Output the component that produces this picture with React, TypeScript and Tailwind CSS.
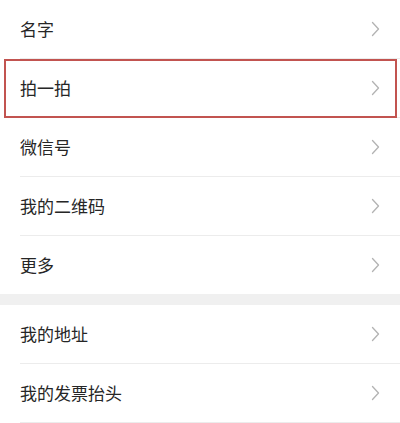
import React from 'react';

const Chevron: React.FC = () => (
  <svg className="w-[9px] h-[16px] text-[#b3b3b3]" viewBox="0 0 9 16" fill="none" stroke="currentColor">
    <path d="M1.5 1.5l6 6.5-6 6.5" strokeWidth={1.3} strokeLinecap="round" strokeLinejoin="round" />
  </svg>
);

const Row: React.FC<{ label: string; last?: boolean; highlight?: boolean }> = ({ label, last, highlight }) => (
  <div className="relative pl-5">
    <div
      className={`flex items-center justify-between h-[58px] pr-[20px] ${last ? '' : 'h-[59px] border-b border-[#ececec]'}`}
    >
      <span className="text-[17px] text-[#262626]">{label}</span>
      <Chevron />
    </div>
    {highlight && (
      <div className="absolute top-0 bottom-0 left-[4px] right-[3px] border-2 border-[#c25450]"></div>
    )}
  </div>
);

export default function App() {
  const groupA = ['名字', '拍一拍', '微信号', '我的二维码', '更多'];
  const groupB = ['我的地址', '我的发票抬头'];

  return (
    <div
      className="w-[400px] h-[423px] bg-white overflow-hidden"
      style={{ fontFamily: '"Noto Sans CJK SC", "Noto Sans", sans-serif' }}
    >
      <div className="bg-white">
        {groupA.map((l, i) => (
          <Row key={l} label={l} last={i === groupA.length - 1} highlight={i === 1} />
        ))}
      </div>
      <div className="h-[11px] bg-[#f0f0f0]"></div>
      <div className="bg-white">
        {groupB.map((l) => (
          <Row key={l} label={l} />
        ))}
      </div>
    </div>
  );
}
